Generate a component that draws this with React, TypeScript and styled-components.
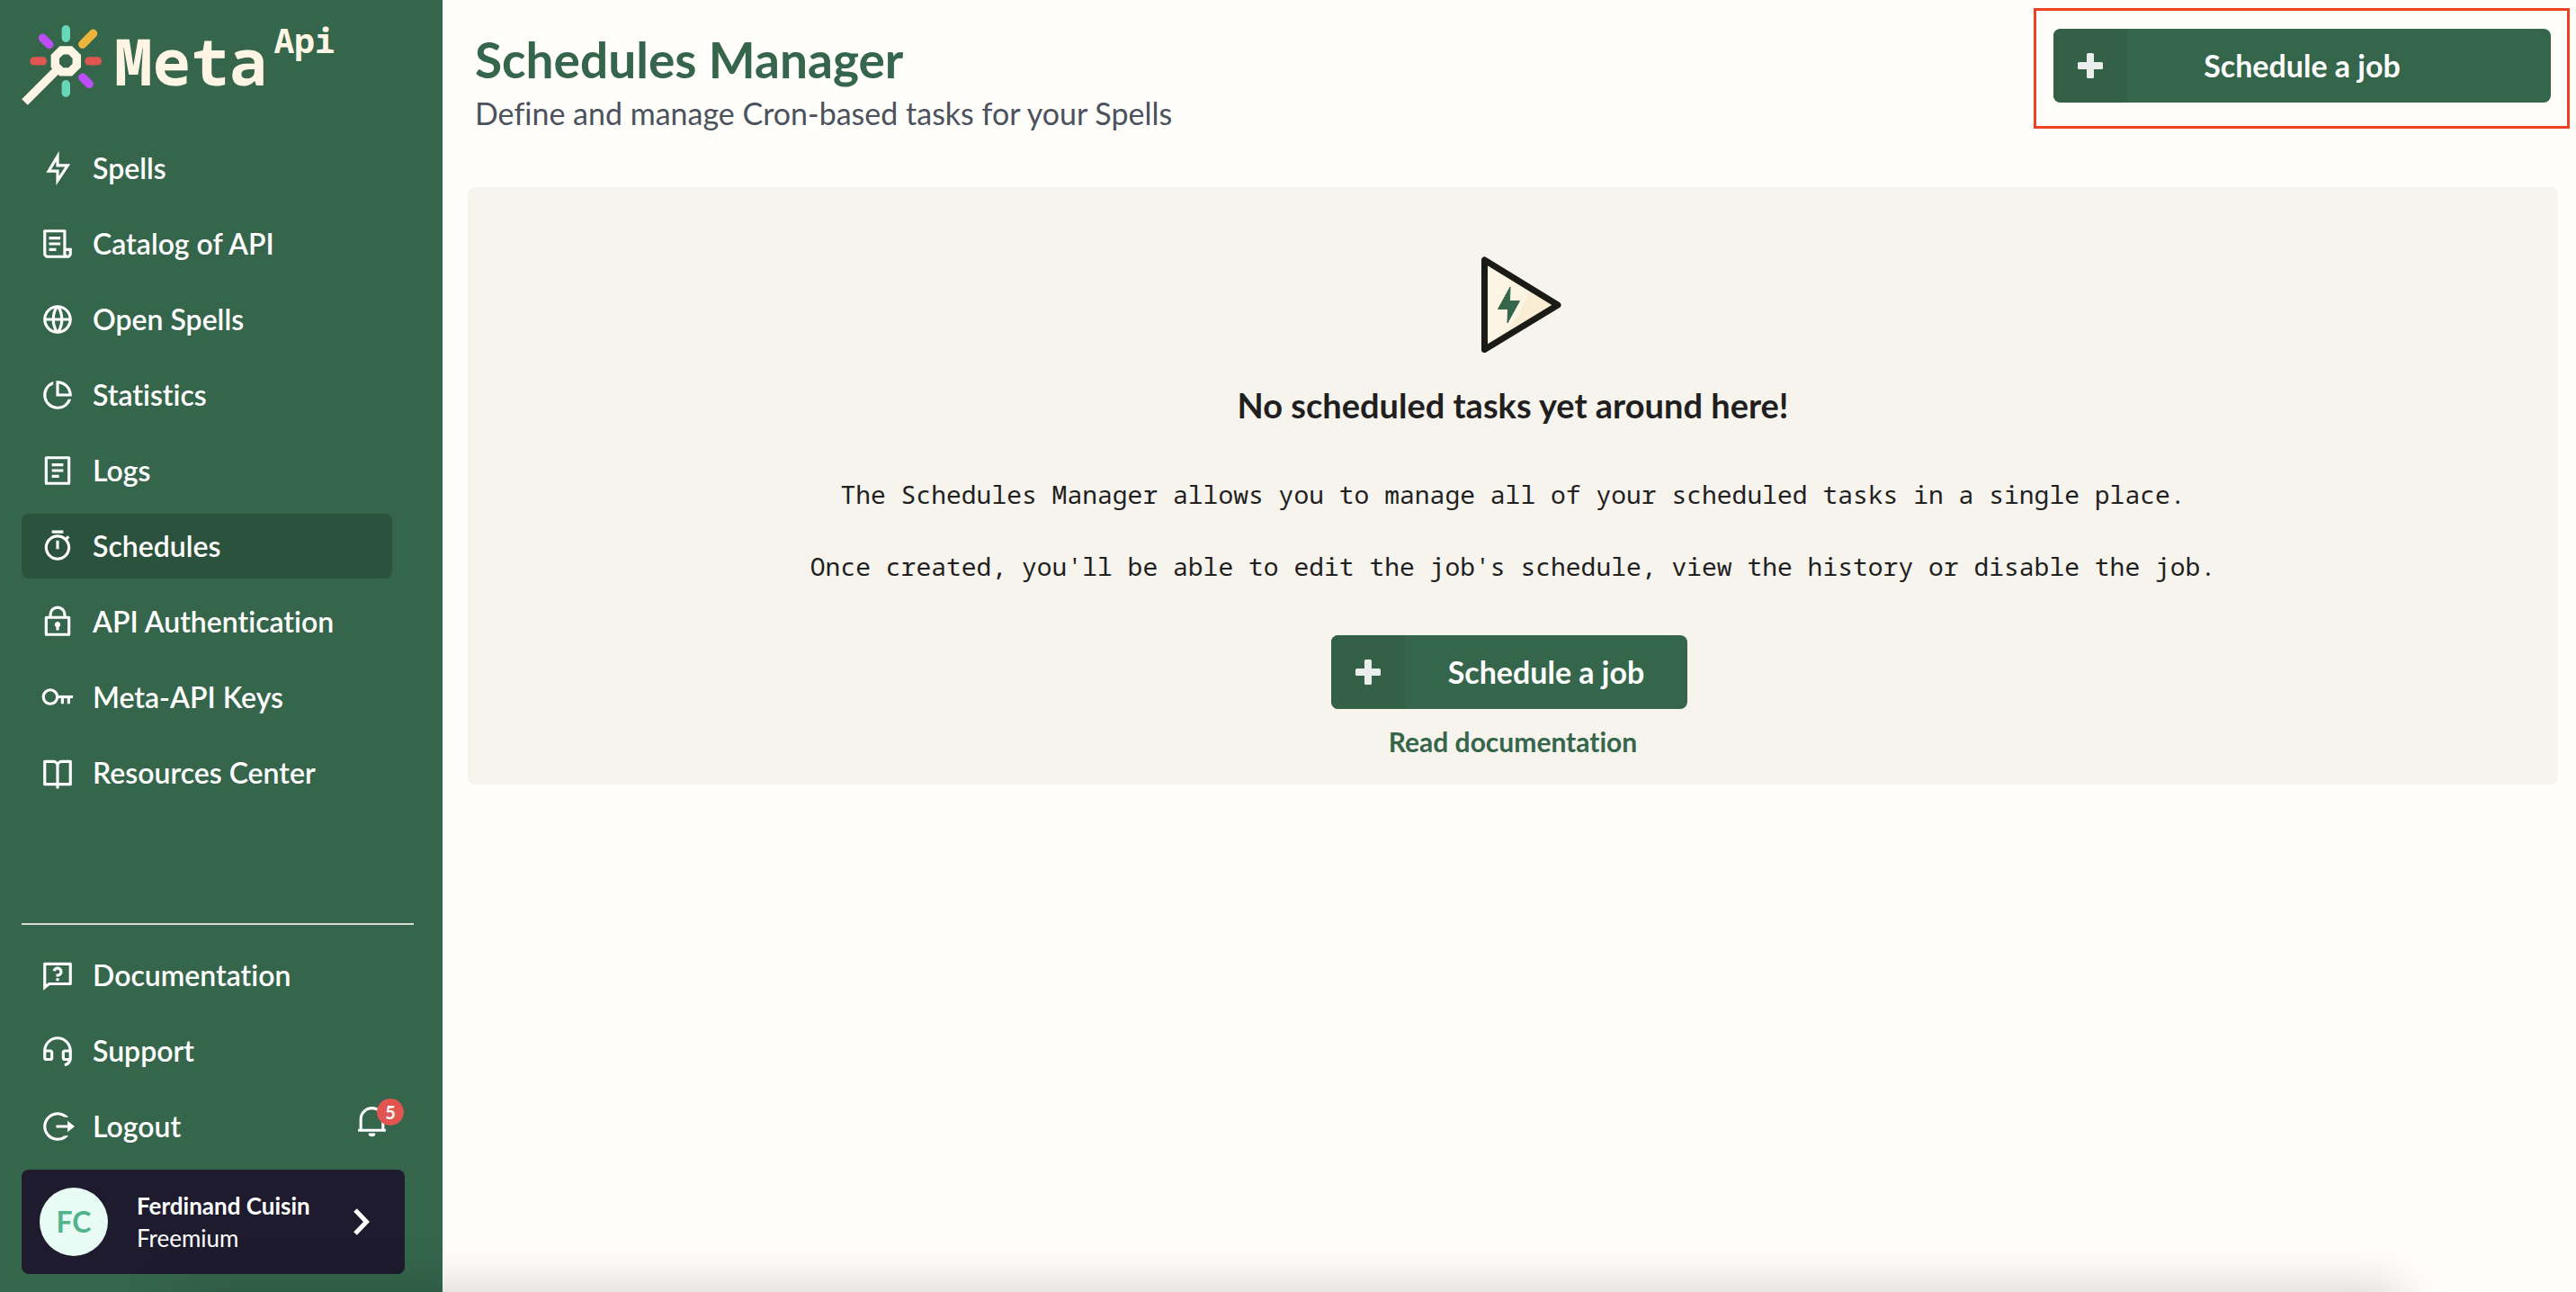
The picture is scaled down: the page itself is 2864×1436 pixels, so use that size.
import React from "react";
import styled, { createGlobalStyle, css } from "styled-components";
import {
  RiFlashlightLine,
  RiFileList3Line,
  RiGlobalLine,
  RiTimerLine,
  RiQuestionnaireLine,
  RiCustomerServiceLine,
} from "react-icons/ri";

const color = {
  green: "#35664c",
  greenDark: "#2b523d",
  greenShade: "#336047",
  cream: "#fef5e4",
  page: "#fffefa",
  panel: "#f7f3ed",
  ink: "#1f1f1f",
  slate: "#4b525d",
  navy: "#1e1b2f",
  red: "#e0554f",
  highlight: "#ee4023",
};

const sans = `Lato, "Open Sans", sans-serif`;
const mono = `"Noto Sans Mono", "Liberation Mono", monospace`;

const GlobalStyle = createGlobalStyle`
  *, *::before, *::after { box-sizing: border-box; }
  body {
    margin: 0;
    background: ${color.page};
    color: ${color.ink};
    font-family: ${sans};
    font-variant-ligatures: none;
    overflow-x: hidden;
  }
  h1, h2, p, ul { margin: 0; padding: 0; }
  a { color: inherit; text-decoration: none; }
  button { border: 0; padding: 0; background: none; color: inherit; font: inherit; cursor: pointer; }
  svg { display: block; flex: none; }
`;

const Shell = styled.div`
  display: flex;
  min-height: 100vh;
`;

const Sidebar = styled.aside`
  flex: none;
  display: flex;
  flex-direction: column;
  width: 492px;
  padding: 24px 32px 20px 24px;
  background: ${color.green};
  color: #fff;
`;

const Brand = styled.a`
  display: flex;
  align-items: flex-start;
  height: 127px;
  color: ${color.cream};
  font-family: ${mono};
  font-weight: 700;
  svg {
    margin: 4px 14px 0 0;
  }
`;

const BrandName = styled.span`
  padding-top: 8px;
  font-size: 71px;
  line-height: 72px;
`;

const BrandSuffix = styled.span`
  padding-left: 7px;
  font-size: 38px;
  line-height: 40px;
`;

const NavList = styled.ul`
  display: flex;
  flex-direction: column;
  gap: 12px;
  list-style: none;
`;

const itemStyle = css`
  display: flex;
  align-items: center;
  gap: 20px;
  width: 412px;
  height: 72px;
  padding: 0 21px;
  border-radius: 8px;
  font-size: 32px;
  font-weight: 600;
  line-height: 40px;
`;

const NavLink = styled.a<{ $active?: boolean }>`
  ${itemStyle}
  background: ${(p) => (p.$active ? color.greenDark : "transparent")};
`;

const LogoutButton = styled.button`
  && {
    ${itemStyle}
    width: auto;
    flex: 1;
  }
`;

const Footer = styled.div`
  display: flex;
  flex-direction: column;
  gap: 12px;
  margin-top: auto;
`;

const Divider = styled.hr`
  width: 100%;
  height: 2px;
  margin: 0 0 8px;
  border: 0;
  background: #d7dcd8;
`;

const LogoutRow = styled.div`
  display: flex;
  align-items: center;
  padding-right: 28px;
`;

const BellButton = styled.button`
  position: relative;
  margin-bottom: 14px;
`;

const Badge = styled.span`
  position: absolute;
  top: -6px;
  right: -17px;
  width: 30px;
  height: 30px;
  border-radius: 50%;
  background: ${color.red};
  font-size: 20px;
  font-weight: 700;
  line-height: 30px;
  text-align: center;
`;

const ProfileCard = styled.button`
  && {
    display: flex;
    align-items: center;
    width: 426px;
    height: 116px;
    padding: 0 39px 0 20px;
    border-radius: 8px;
    background: ${color.navy};
    text-align: left;
  }
`;

const Avatar = styled.span`
  display: grid;
  place-items: center;
  width: 76px;
  height: 76px;
  margin-right: 32px;
  border-radius: 50%;
  background: #e9fbf5;
  color: #52b48a;
  font-size: 32px;
  font-weight: 700;
  line-height: 40px;
`;

const ProfileText = styled.span`
  flex: 1;
  display: flex;
  flex-direction: column;
  font-size: 26px;
  line-height: 36px;
`;

const Main = styled.main`
  flex: 1;
  min-width: 0;
`;

const Header = styled.header`
  display: flex;
  justify-content: space-between;
  align-items: flex-start;
  padding: 9px 7px 0 36px;
`;

const Heading = styled.div`
  display: flex;
  flex-direction: column;
  gap: 8px;
  padding-top: 25px;
`;

const Title = styled.h1`
  color: ${color.green};
  font-size: 55px;
  font-weight: 700;
  line-height: 64px;
`;

const Subtitle = styled.p`
  color: ${color.slate};
  font-size: 34px;
  line-height: 40px;
`;

const Highlight = styled.div`
  width: 596px;
  padding: 20px 18px 26px 19px;
  border: 3px solid ${color.highlight};
`;

const PrimaryButton = styled.button<{ $wide?: boolean }>`
  && {
    display: grid;
    grid-template-columns: ${(p) => (p.$wide ? "82px 1fr 82px" : "82px auto")};
    align-items: center;
    width: ${(p) => (p.$wide ? "100%" : "auto")};
    height: 82px;
    overflow: hidden;
    border-radius: 8px;
    background: ${color.green};
    color: #fff;
    font-size: 34px;
    font-weight: 700;
    line-height: 40px;
  }
`;

const ButtonIcon = styled.span`
  display: grid;
  place-items: center;
  height: 100%;
  background: ${color.greenShade};
`;

const ButtonLabel = styled.span`
  padding: 0 48px;
  text-align: center;
`;

const Panel = styled.section`
  display: flex;
  flex-direction: column;
  align-items: center;
  margin: 62px 20px 0 28px;
  padding: 77px 24px 30px;
  border-radius: 8px;
  background: ${color.panel};
`;

const PanelTitle = styled.h2`
  margin-top: 34px;
  font-size: 38px;
  font-weight: 700;
  line-height: 48px;
`;

const PanelText = styled.div`
  display: flex;
  flex-direction: column;
  gap: 40px;
  margin: 55px 0 57px;
  font-family: ${mono};
  font-size: 28px;
  line-height: 40px;
  text-align: center;
`;

const PanelAction = styled.div`
  padding-right: 8px;
`;

const DocLink = styled.a`
  && {
    margin-top: 18px;
    color: ${color.green};
    font-size: 30px;
    font-weight: 700;
    line-height: 36px;
  }
`;

const DockShadow = styled.div`
  position: fixed;
  top: 100%;
  left: 194px;
  right: 194px;
  height: 100px;
  box-shadow: 0 0 60px rgba(0, 0, 0, 0.2);
  pointer-events: none;
`;

const LogoMark = () => (
  <svg width="89" height="89" viewBox="24 28 89 89" aria-hidden="true" fill="none">
    <g strokeWidth="9.4" strokeLinecap="round">
      <path stroke="#66d7b7" d="M73.3 32.7v9.6M73.3 93.7v9.6" />
      <path stroke={color.red} d="M38 67.9h9.4M99 67.9h9.4" />
      <path stroke="#bd4df6" d="M47.5 42.3l7.3 7.2M91.8 86.2l7.3 7.2" />
      <path stroke="#edb43c" d="M91.8 49.3l11.8-12" />
    </g>
    <path stroke={color.cream} strokeWidth="9.4" d="M27.5 113.5L65 76" />
    <path
      stroke={color.cream}
      strokeWidth="9.4"
      d="M68.4 55.9h9.8l7.1 7.1v9.8l-7.1 7.1h-9.8l-7.1-7.1v-9.8z"
    />
  </svg>
);

const Glyph = ({ d, size = 38 }: { d: string; size?: number }) => (
  <svg width={size} height={size} viewBox="0 0 24 24" fill="currentColor" aria-hidden="true">
    <path d={d} />
  </svg>
);

const PieIcon = () => (
  <Glyph d="M9 2.458v2.124A8.003 8.003 0 0 0 12 20a8.003 8.003 0 0 0 7.419-5h2.123c-1.274 4.057-5.064 7-9.542 7-5.523 0-10-4.477-10-10 0-4.478 2.943-8.268 7-9.542zM12 2c5.523 0 10 4.477 10 10 0 .338-.017.671-.05 1H11V2.05c.329-.033.662-.05 1-.05zm1 2.062V11h6.938A8.004 8.004 0 0 0 13 4.062z" />
);
const LogsIcon = () => (
  <Glyph d="M20 22H4a1 1 0 0 1-1-1V3a1 1 0 0 1 1-1h16a1 1 0 0 1 1 1v18a1 1 0 0 1-1 1zm-1-2V4H5v16h14zM8 7h8v2H8V7zm0 4h8v2H8v-2zm0 4h5v2H8v-2z" />
);
const LockIcon = () => (
  <Glyph d="M6 8V7a6 6 0 1 1 12 0v1h2a1 1 0 0 1 1 1v12a1 1 0 0 1-1 1H4a1 1 0 0 1-1-1V9a1 1 0 0 1 1-1h2zm13 2H5v10h14V10zm-8 5.732a2 2 0 1 1 2 0V18h-2v-2.268zM8 8h8V7a4 4 0 1 0-8 0v1z" />
);
const BookIcon = () => (
  <Glyph d="M13 21v2h-2v-2H3a1 1 0 0 1-1-1V4a1 1 0 0 1 1-1h6a3.99 3.99 0 0 1 3 1.354A3.99 3.99 0 0 1 15 3h6a1 1 0 0 1 1 1v16a1 1 0 0 1-1 1h-8zm7-2V5h-5a2 2 0 0 0-2 2v12h7zm-9 0V7a2 2 0 0 0-2-2H4v14h7z" />
);
const LogoutIcon = () => (
  <Glyph d="M18.537 19.567A9.961 9.961 0 0 1 12 22C6.477 22 2 17.523 2 12S6.477 2 12 2c2.5 0 4.784.917 6.537 2.433L19.7 5.6h-2.9A8 8 0 1 0 16.8 18.4h2.9l-1.163 1.167zM19 16v-3h-8v-2h8V8l5 4-5 4z" />
);
const BellIcon = () => (
  <Glyph
    size={37}
    d="M22 20H2v-2h1v-6.969C3 6.043 7.03 2 12 2s9 4.043 9 9.031V18h1v2zM5 18h14v-6.969C19 7.148 15.866 4 12 4s-7 3.148-7 7.031V18zm4.5 3h5a2.5 2.5 0 1 1-5 0z"
  />
);
const KeyIcon = () => (
  <svg width="38" height="38" viewBox="0 0 24 24" fill="none" stroke="currentColor" strokeWidth="2" aria-hidden="true">
    <circle cx="6.9" cy="11.7" r="4.9" />
    <path d="M11.8 11.7h11" />
    <path d="M15.4 12v4.5M19.8 12v4.5" />
  </svg>
);
const PlusIcon = () => (
  <svg width="28" height="28" viewBox="0 0 28 28" fill="#e9eeec" aria-hidden="true">
    <rect x="10" y="0" width="8" height="28" rx="1.6" />
    <rect x="0" y="10" width="28" height="8" rx="1.6" />
  </svg>
);
const ChevronIcon = () => (
  <svg width="18" height="30" viewBox="0 0 18 30" fill="none" stroke="#fff" strokeWidth="5" aria-hidden="true">
    <path d="M2 2l12.5 13L2 28" />
  </svg>
);

const EmptyIllustration = () => (
  <svg width="108" height="107" viewBox="0 0 108 107" aria-hidden="true">
    <path fill="#fdf5e3" d="M22.5 4v99.5L104 54z" />
    <path fill="#f9edd3" d="M73 35Q62 73 31 98l-6 5L104 54z" />
    <path
      fill="none"
      stroke="#1a1a16"
      strokeWidth="7"
      strokeLinejoin="round"
      d="M22.5 4v99.5L104 54z"
    />
    <path
      fill={color.green}
      stroke={color.green}
      strokeLinejoin="round"
      d="M51 34L37.5 58.5H48.5L48 74L61.5 49.5H50.5z"
    />
  </svg>
);

type NavEntry = { label: string; icon: React.ReactNode; active?: boolean };

const primaryNav: NavEntry[] = [
  { label: "Spells", icon: <RiFlashlightLine size={38} /> },
  { label: "Catalog of API", icon: <RiFileList3Line size={38} /> },
  { label: "Open Spells", icon: <RiGlobalLine size={38} /> },
  { label: "Statistics", icon: <PieIcon /> },
  { label: "Logs", icon: <LogsIcon /> },
  { label: "Schedules", icon: <RiTimerLine size={38} />, active: true },
  { label: "API Authentication", icon: <LockIcon /> },
  { label: "Meta-API Keys", icon: <KeyIcon /> },
  { label: "Resources Center", icon: <BookIcon /> },
];

const secondaryNav: NavEntry[] = [
  { label: "Documentation", icon: <RiQuestionnaireLine size={38} /> },
  { label: "Support", icon: <RiCustomerServiceLine size={38} /> },
];

const Nav = ({ items }: { items: NavEntry[] }) => (
  <NavList>
    {items.map(({ label, icon, active }) => (
      <li key={label}>
        <NavLink href="#" $active={active} aria-current={active ? "page" : undefined}>
          {icon}
          {label}
        </NavLink>
      </li>
    ))}
  </NavList>
);

const ScheduleButton = ({ wide }: { wide?: boolean }) => (
  <PrimaryButton type="button" $wide={wide}>
    <ButtonIcon>
      <PlusIcon />
    </ButtonIcon>
    <ButtonLabel>Schedule a job</ButtonLabel>
  </PrimaryButton>
);

export default function App() {
  return (
    <>
      <GlobalStyle />
      <Shell>
        <Sidebar>
          <Brand href="#">
            <LogoMark />
            <BrandName>Meta</BrandName>
            <BrandSuffix>Api</BrandSuffix>
          </Brand>
          <nav>
            <Nav items={primaryNav} />
          </nav>
          <Footer>
            <Divider />
            <Nav items={secondaryNav} />
            <LogoutRow>
              <LogoutButton type="button">
                <LogoutIcon />
                Logout
              </LogoutButton>
              <BellButton type="button" aria-label="Notifications">
                <BellIcon />
                <Badge>5</Badge>
              </BellButton>
            </LogoutRow>
            <ProfileCard type="button">
              <Avatar>FC</Avatar>
              <ProfileText>
                <strong>Ferdinand Cuisin</strong>
                <span>Freemium</span>
              </ProfileText>
              <ChevronIcon />
            </ProfileCard>
          </Footer>
        </Sidebar>
        <Main>
          <Header>
            <Heading>
              <Title>Schedules Manager</Title>
              <Subtitle>Define and manage Cron-based tasks for your Spells</Subtitle>
            </Heading>
            <Highlight>
              <ScheduleButton wide />
            </Highlight>
          </Header>
          <Panel>
            <EmptyIllustration />
            <PanelTitle>No scheduled tasks yet around here!</PanelTitle>
            <PanelText>
              <p>The Schedules Manager allows you to manage all of your scheduled tasks in a single place.</p>
              <p>Once created, you'll be able to edit the job's schedule, view the history or disable the job.</p>
            </PanelText>
            <PanelAction>
              <ScheduleButton />
            </PanelAction>
            <DocLink href="#">Read documentation</DocLink>
          </Panel>
        </Main>
      </Shell>
      <DockShadow />
    </>
  );
}
